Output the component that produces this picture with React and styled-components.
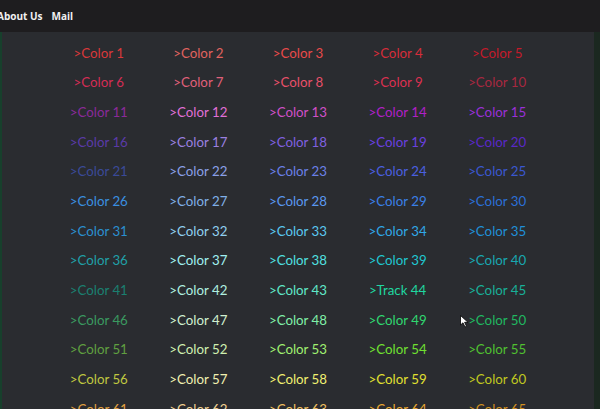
import React from "react";
import styled, { createGlobalStyle } from "styled-components";

const Global = createGlobalStyle`
  html, body { margin: 0; padding: 0; background: #2a2c30; }
  body { font-family: "Lato", "Open Sans", sans-serif; overflow: hidden; }
`;

const Page = styled.div`
  width: 600px;
  height: 409px;
  display: flex;
  flex-direction: column;
  overflow: hidden;
  position: relative;
`;

const Nav = styled.nav`
  height: 32px;
  flex: none;
  background: #1e1d1f;
  display: flex;
  align-items: center;
  gap: 9px;
  margin-left: -3px;
`;

const NavLink = styled.a`
  color: #f0f0f0;
  font-family: "Open Sans", sans-serif;
  font-weight: 700;
  font-size: 10px;
  text-decoration: none;
`;

const Body = styled.main`
  flex: 1;
  display: flex;
  background: #2a2c30;
  border-left: 2px solid #17402c;
  border-right: 6px solid #1b2820;
`;

const Grid = styled.div`
  width: 498px;
  margin: 0 auto;
  padding-top: 6px;
  display: grid;
  grid-template-columns: repeat(5, 1fr);
  grid-auto-rows: 29.67px;
  align-items: center;
`;

const Item = styled.span`
  text-align: center;
  font-size: 13.3px;
  color: ${(p) => p.$c};
  white-space: nowrap;
`;

const Cursor = styled.svg`
  position: absolute;
  left: 460px;
  top: 315px;
`;

const colors = [
  "#d9383a", "#e0635f", "#e84a4a", "#d62d3a", "#c41a2a",
  "#d42c55", "#e0607a", "#e8506a", "#dc3050", "#a82840",
  "#8a2a9a", "#e070d8", "#d050c8", "#b020c8", "#9a30d8",
  "#5a3aa8", "#9a80e0", "#8060e0", "#6a40e0", "#5a28c8",
  "#3a4a98", "#8aa0e8", "#6a80e8", "#4a60e0", "#3a58d0",
  "#3a90e0", "#80b0e8", "#5a98f0", "#3a80e8", "#2a70d8",
  "#2a90d0", "#90d0f0", "#5ac8f0", "#30a8e8", "#2090d8",
  "#20a0a8", "#a0f0f0", "#50e0e0", "#20c8d0", "#18a8b0",
  "#1a8070", "#b0f0e0", "#60e8c8", "#20d8a0", "#18b098",
  "#3a9a60", "#d0f0d0", "#80f0a8", "#30d870", "#20b860",
  "#60a040", "#d0f0b0", "#a0f070", "#70e030", "#50c030",
  "#c0c840", "#f0f0b0", "#f0f070", "#e0e030", "#c0c820",
  "#e0a040", "#f0d090", "#f0c060", "#e8a830", "#d09020",
];

export default function App() {
  return (
    <Page>
      <Global />
      <Nav>
        <NavLink href="#">About Us</NavLink>
        <NavLink href="#">Mail</NavLink>
      </Nav>
      <Body>
        <Grid>
          {colors.map((c, i) => (
            <Item key={i} $c={c}>
              {">"}
              {i === 43 ? "Track" : "Color"} {i + 1}
            </Item>
          ))}
        </Grid>
      </Body>
      <Cursor width="9" height="13" viewBox="0 0 9 13">
        <path d="M0.5 0.5 L0.5 10 L3 7.8 L5 12 L6.5 11.3 L4.6 7.3 L8 7.3 Z" fill="#fff" stroke="#000" strokeWidth="0.8" />
      </Cursor>
    </Page>
  );
}
